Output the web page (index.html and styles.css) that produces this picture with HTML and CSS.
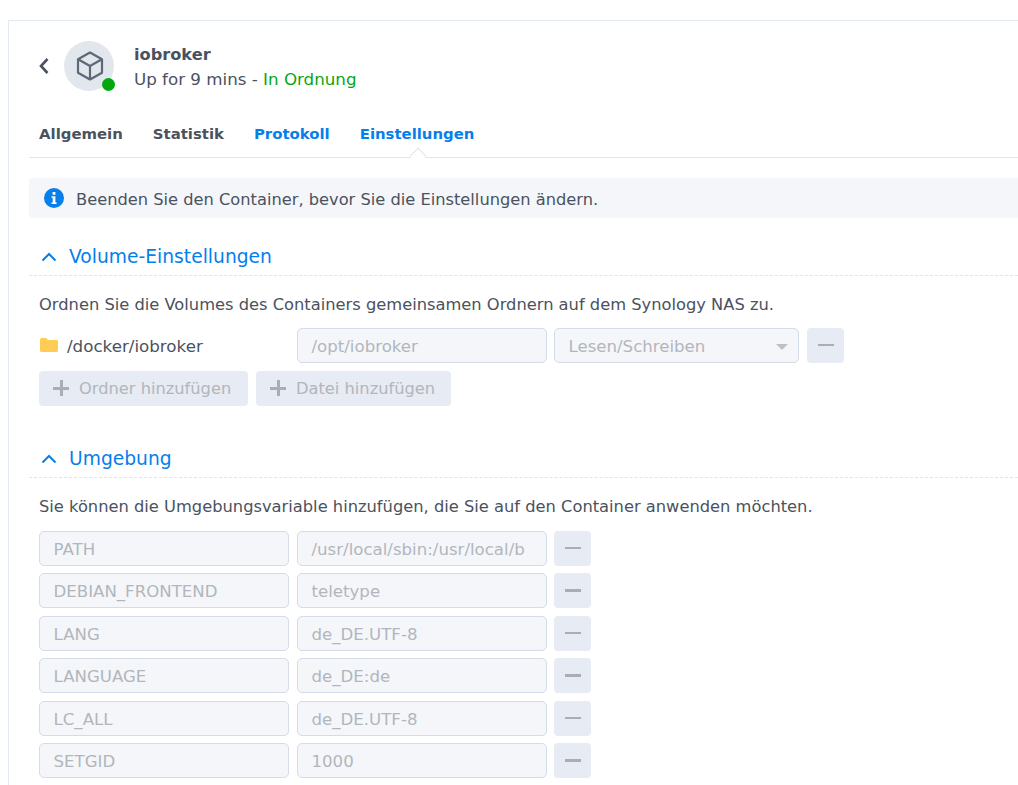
FILE: index.html
```html
<!DOCTYPE html>
<html lang="de">
<head>
<meta charset="utf-8">
<title>iobroker</title>
<link rel="stylesheet" href="styles.css">
</head>
<body>
<div class="top"></div>
<main class="panel">
  <header class="head">
    <svg class="back" viewBox="0 0 12 18" width="12" height="18"><path d="M9.500 2 3 9l6.500 7" fill="none" stroke="#4a5260" stroke-width="2.600"/></svg>
    <div class="avatar">
      <svg class="cube" viewBox="0 0 32 32" width="32" height="32"><path d="M16 2.500 28 9.300v13.400L16 29.500 4 22.700V9.300z M4.500 9.500 16 16l11.500-6.500 M16 16v13" fill="none" stroke="#5f6877" stroke-width="2.200" stroke-linejoin="round"/></svg>
      <span class="dot"></span>
    </div>
    <div class="titles">
      <div class="name">iobroker</div>
      <div class="status">Up for 9 mins - <span class="ok">In Ordnung</span></div>
    </div>
  </header>
  <nav class="tabs">
    <span class="tab">Allgemein</span>
    <span class="tab">Statistik</span>
    <span class="tab blue">Protokoll</span>
    <span class="tab blue current">Einstellungen</span>
  </nav>
  <div class="notice">
    <svg viewBox="0 0 20 20" width="20" height="20"><circle cx="10" cy="10" r="10" fill="#057feb"/><rect x="8.600" y="4" width="2.800" height="2.800" fill="#fff"/><path d="M7.500 8.300h3.900v6.200h1.200v1.500H7.500v-1.500h1.200V9.800H7.500z" fill="#fff"/></svg>
    <span class="notice-text">Beenden Sie den Container, bevor Sie die Einstellungen ändern.</span>
  </div>

  <section class="section">
    <h2 class="sec-title"><svg viewBox="0 0 16 10" width="16" height="10"><path d="M1.500 8.500 8 2l6.500 6.500" fill="none" stroke="#057feb" stroke-width="2"/></svg>Volume-Einstellungen</h2>
    <p class="desc">Ordnen Sie die Volumes des Containers gemeinsamen Ordnern auf dem Synology NAS zu.</p>
    <div class="row">
      <div class="folder">
        <svg viewBox="0 0 18 16" width="18" height="16"><path d="M0 2.500A1.500 1.500 0 0 1 1.500 1h4.700l1.800 2h8.500A1.500 1.500 0 0 1 18 4.500v9a1.500 1.500 0 0 1-1.500 1.500h-15A1.500 1.500 0 0 1 0 13.500z" fill="#ffcd55"/></svg>
        <span class="folder-name">/docker/iobroker</span>
      </div>
      <div class="field">/opt/iobroker</div>
      <div class="field select">Lesen/Schreiben<i class="caret"></i></div>
      <div class="minus"><i></i></div>
    </div>
    <div class="actions">
      <div class="btn first"><b class="plus"></b>Ordner hinzufügen</div>
      <div class="btn second"><b class="plus"></b>Datei hinzufügen</div>
    </div>
  </section>

  <section class="section env">
    <h2 class="sec-title"><svg viewBox="0 0 16 10" width="16" height="10"><path d="M1.500 8.500 8 2l6.500 6.500" fill="none" stroke="#057feb" stroke-width="2"/></svg>Umgebung</h2>
    <p class="desc">Sie können die Umgebungsvariable hinzufügen, die Sie auf den Container anwenden möchten.</p>
    <div class="row"><div class="field key">PATH</div><div class="field">/usr/local/sbin:/usr/local/b</div><div class="minus"><i></i></div></div>
    <div class="row"><div class="field key">DEBIAN_FRONTEND</div><div class="field">teletype</div><div class="minus"><i></i></div></div>
    <div class="row"><div class="field key">LANG</div><div class="field">de_DE.UTF-8</div><div class="minus"><i></i></div></div>
    <div class="row"><div class="field key">LANGUAGE</div><div class="field">de_DE:de</div><div class="minus"><i></i></div></div>
    <div class="row"><div class="field key">LC_ALL</div><div class="field">de_DE.UTF-8</div><div class="minus"><i></i></div></div>
    <div class="row"><div class="field key">SETGID</div><div class="field">1000</div><div class="minus"><i></i></div></div>
  </section>
</main>
</body>
</html>
```
FILE: styles.css
```css
* { box-sizing: border-box; }
html, body { margin: 0; height: 100%; overflow: hidden; background: #fff; }
body { font-family: "DejaVu Sans", sans-serif; font-size: 16.300px; color: #4a5260; }
.top { height: 20px; }
.panel { height: 765px; margin-left: 8px; border-top: 1px solid #e3e9f1; border-left: 1px solid #e3e9f1; padding-left: 20px; overflow: hidden; }
.head { display: flex; align-items: center; height: 90px; padding-left: 9px; }
.back { margin-right: 14px; }
.avatar { position: relative; width: 50px; height: 50px; border-radius: 50%; background: #e2e7ee; display: flex; align-items: center; justify-content: center; margin-right: 20px; }
.cube { margin-left: 1px; }
.dot { position: absolute; right: -1px; bottom: 0; width: 13px; height: 13px; border-radius: 50%; background: #05a70f; }
.titles { margin-top: 2px; }
.name { font-weight: 700; font-size: 16.200px; line-height: 25px; }
.status { line-height: 25px; font-size: 16.700px; }
.ok { color: #05a70f; }
.tabs { display: flex; gap: 30px; height: 47px; padding-left: 10px; border-bottom: 1px solid #dfe5ec; line-height: 47px; font-weight: 700; font-size: 14.900px; }
.blue { color: #057feb; }
.current { position: relative; }
.current::after { content: ""; position: absolute; left: 50%; bottom: -5px; width: 11px; height: 11px; margin-left: -5px; background: #fff; border-top: 1px solid #dfe5ec; border-left: 1px solid #dfe5ec; transform: rotate(45deg); }
.notice { display: flex; align-items: center; gap: 12px; height: 40px; margin-top: 20px; padding-left: 15px; background: #f4f6fa; border-radius: 4px 0 0 4px; }
.notice-text { margin-top: 3px; font-size: 16.250px; }
.section { margin-top: 21px; }
.sec-title { margin: 0; height: 37px; border-bottom: 1px dashed #dfe5ec; display: flex; align-items: flex-start; gap: 12px; padding-left: 12px; color: #057feb; font-size: 18.700px; font-weight: 400; line-height: 36px; }
.sec-title svg { margin-top: 13px; }
.desc { margin: 19px 0 0; padding-left: 10px; line-height: 20px; }
.row { display: flex; gap: 8px; height: 35px; margin-top: 7.500px; padding-left: 10px; }
.section .desc + .row { margin-top: 12.700px; }
.env .desc + .row { margin-top: 13.900px; }
.folder { width: 250px; display: flex; align-items: center; gap: 9px; padding-left: 1px; font-size: 16.700px; }
.folder-name { margin-top: 2px; }
.field { width: 250px; height: 35px; line-height: 35px; padding-left: 13.500px; background: #f4f6fa; border: 1px solid #d3dce8; border-radius: 5px; color: #b2b6bc; white-space: nowrap; overflow: hidden; font-size: 16.600px; }
.select { width: 245px; margin-left: -1px; position: relative; }
.caret { position: absolute; right: 10px; top: 15px; border: 6px solid transparent; border-top: 6px solid #bcc1c8; border-bottom: 0; }
.minus { width: 37px; height: 35px; border-radius: 4px; background: #e7ebf3; display: flex; align-items: center; justify-content: center; }
.env .minus { margin-left: -1px; }
.minus i { display: block; width: 16px; height: 2.500px; background: #a9aeb6; }
.actions { display: flex; gap: 8px; margin-top: 8px; padding-left: 10px; }
.btn { height: 35px; line-height: 35px; padding-left: 14px; border-radius: 4px; background: #e7ebf3; color: #b2b6bc; display: flex; align-items: center; gap: 10px; font-size: 16.250px; }
.first { width: 209px; }
.second { width: 195px; }
.plus { position: relative; display: block; width: 16px; height: 16px; }
.plus::before { content: ""; position: absolute; left: 0; top: 7px; width: 16px; height: 2.500px; background: #a9aeb6; }
.plus::after { content: ""; position: absolute; left: 7px; top: 0; width: 2.500px; height: 16px; background: #a9aeb6; }
.env { margin-top: 35px; }
```
